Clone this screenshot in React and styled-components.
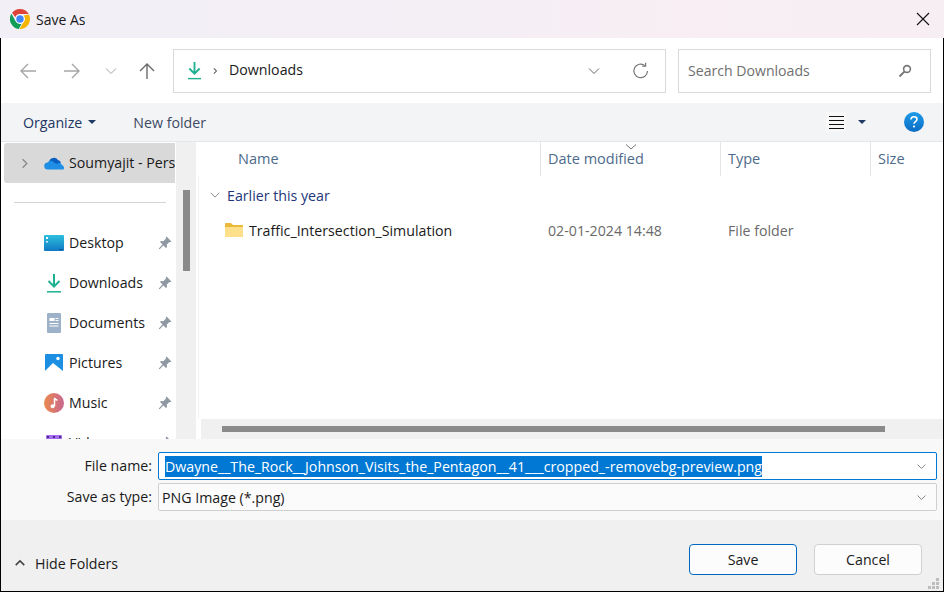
import React from "react";
import styled, { createGlobalStyle } from "styled-components";

const Global = createGlobalStyle`
  html, body { margin: 0; padding: 0; background: #fff; }
  * { box-sizing: border-box; }
  #root { width: 944px; height: 592px; }
`;

const Dialog = styled.div`
  width: 944px; height: 592px; display: flex; flex-direction: column; overflow: hidden;
  font-family: "Open Sans", "Noto Sans", sans-serif; font-size: 14.2px; color: #1a1a1a;
  border-bottom: 1px solid #000; background: #fff;
`;
const TitleBar = styled.div`
  height: 38px; flex: none; display: flex; align-items: center; padding: 0 14px 0 10px; gap: 6px;
  background: linear-gradient(90deg, #f2eff6 0%, #f4eff5 50%, #f8eef3 72%, #f7eef4 100%);
`;
const TitleText = styled.span` font-size: 14px; flex: 1; `;
const Body = styled.div`
  flex: 1; min-height: 0; display: flex; flex-direction: column;
  border-left: 1px solid #000; border-right: 1px solid #000;
`;
const NavRow = styled.div`
  height: 65px; flex: none; display: flex; align-items: center; padding: 0 12px 0 19px; background: #fff;
`;
const NavButton = styled.div`
  width: ${p => p.$w}px; flex: none; display: flex; align-items: center; justify-content: flex-start;
`;
const AddressBox = styled.div`
  width: 493px; height: 44px; flex: none; display: flex; align-items: center; margin-right: 12px;
  border: 1px solid #d9d9d9; padding: 0 15px 0 13px;
`;
const Crumb = styled.span` flex: 1; margin-left: 10px; padding-bottom: 2px; `;
const CrumbSep = styled.span` display: flex; margin-left: 9px; `;
const CrumbDrop = styled.span` display: flex; margin-right: 2px; `;
const RefreshSlot = styled.span` display: flex; margin-left: 29px; `;
const SearchBox = styled.div`
  width: 253px; height: 44px; flex: none; display: flex; align-items: center; justify-content: space-between;
  border: 1px solid #d9d9d9; padding: 0 18px 0 9px; color: #6f6f6f; font-size: 14.1px;
`;
const Toolbar = styled.div`
  height: 39px; flex: none; display: flex; align-items: center; padding: 0 19px 0 22px; background: #f3f4f6;
  border-bottom: 1px solid #e6e6e6; color: #1f3864;
`;
const ToolLabel = styled.span` display: flex; align-items: center; gap: 6px; color: ${p => p.$c || "#22365f"}; margin-right: ${p => p.$mr || 0}px; `;
const ToolSpacer = styled.div` flex: 1; `;
const ViewButton = styled.span` display: flex; width: 20px; height: 20px; align-items: center; justify-content: center; background: #f8f8f8; margin-right: 12px; `;
const Caret = styled.span`
  width: 0; height: 0; border-left: 4px solid transparent; border-right: 4px solid transparent;
  border-top: 4px solid #1f3864; display: inline-block;
`;
const HelpGap = styled.span` width: 38px; `;
const Main = styled.div` flex: 1; min-height: 0; display: flex; `;
const Sidebar = styled.div` width: 175px; flex: none; padding: 1px 0 0 3px; overflow: hidden; `;
const SelectedRow = styled.div`
  height: 40px; display: flex; align-items: center; background: #d9d9d9; border-radius: 3px 0 0 3px;
  padding-left: 14px; white-space: nowrap; overflow: hidden; margin-right: 1px;
`;
const RowArrow = styled.span` display: flex; flex: none; margin-right: 13px; `;
const RowCloud = styled.span` display: flex; flex: none; margin-right: 5px; `;
const RowLabel = styled.span` padding-bottom: 2px; `;
const Divider = styled.div` height: 1px; background: #d4d4d4; margin: 19px 10px 20px 10px; `;
const NavItem = styled.div` height: 40px; display: flex; align-items: center; padding-left: 37px; `;
const NavIcon = styled.span` width: 25px; display: flex; justify-content: center; flex: none; margin-right: 3px; `;
const NavText = styled.span` flex: 1; white-space: nowrap; padding-bottom: 2px; `;
const PinSlot = styled.span` display: flex; flex: none; margin-right: 4px; `;
const SideTrack = styled.div` width: 20px; flex: none; background: #f0f0f0; padding: 48px 6px 0 7px; `;
const SideThumb = styled.div` height: 81px; background: #8a8a8a; `;
const ListPane = styled.div` flex: 1; min-width: 0; display: flex; flex-direction: column; `;
const ListHeader = styled.div` height: 34px; flex: none; display: grid; grid-template-columns: 345px 180px 150px 1fr; color: #4e6a8a; font-size: 14.5px; `;
const HeadCell = styled.div`
  position: relative; display: flex; align-items: center; padding: 0 0 2px ${p => p.$pl || 7}px;
  border-right: ${p => p.$noline ? "none" : "1px solid #e5e5e5"};
`;
const SortMark = styled.span` position: absolute; left: 84px; top: 2px; display: flex; `;
const ListBody = styled.div` flex: 1; min-height: 0; margin-left: 2px; border-left: 1px solid #f2f2f2; display: flex; flex-direction: column; `;
const GroupRow = styled.div` height: 39px; display: flex; align-items: center; padding: 0 0 1px 10px; gap: 6px; color: #22367a; flex: none; `;
const FileRow = styled.div` height: 30px; display: grid; grid-template-columns: 342px 180px 150px; align-items: center; flex: none; `;
const FileName = styled.div` display: flex; align-items: center; gap: 6px; padding-left: 26px; `;
const FileMeta = styled.div` color: #6a6a6a; padding-left: 7px; `;
const HTrack = styled.div` height: 20px; flex: none; background: #f0f0f0; margin-left: 5px; padding: 7px 58px 7px 21px; `;
const HThumb = styled.div` height: 6px; background: #8a8a8a; `;
const FormArea = styled.div`
  height: 81px; flex: none; background: #f8f8f8; padding: 13px 6px 0 0; display: grid;
  grid-template-columns: 151px 1fr; column-gap: 6px; row-gap: 3px; grid-auto-rows: 28px; align-items: center;
`;
const FieldLabel = styled.label` text-align: right; white-space: nowrap; padding-bottom: 2px; `;
const Field = styled.div`
  height: 28px; display: flex; align-items: center; justify-content: space-between; background: ${p => p.$focus ? "#fff" : "#fbfbfb"};
  border: 1px solid ${p => p.$focus ? "#0078d4" : "#cfcfcf"}; border-radius: 2px;
  padding: 0 9px 0 ${p => p.$focus ? 6 : 3}px; white-space: nowrap;
`;
const Selected = styled.span` background: #0078d4; color: #fff; line-height: 21px; `;
const Footer = styled.div`
  height: 71px; flex: none; background: #f0f0f0; display: flex; align-items: flex-start; position: relative;
  padding: 24px 21px 0 13px;
`;
const HideFolders = styled.div` display: flex; align-items: center; gap: 9px; flex: 1; margin-top: 7px; height: 24px; `;
const Btn = styled.button`
  width: 108px; height: 31px; font: inherit; color: #1a1a1a; background: #fcfcfc; padding: 0; border-radius: 4px;
  border: 1px solid ${p => p.$primary ? "#0067c0" : "#d0d0d0"}; margin-left: ${p => p.$ml || 0}px;
`;
const Grip = styled.svg` position: absolute; right: 3px; bottom: 1px; `;

const Chevron = ({ size = 14, color = "#777", up, right, w = 1 }) => (
  <svg width={size} height={size} viewBox="0 0 14 14" fill="none" stroke={color} strokeWidth={w}>
    <path d={up ? "M2 9.5 7 4.5 12 9.5" : right ? "M5 2.5 9.5 7 5 11.5" : "M2 4.5 7 9.5 12 4.5"} />
  </svg>
);
const Arrow = ({ color, dir }) => {
  const d = { left: "M16 9H1M8 2 1 9l7 7", right: "M0 9h15M8 2l7 7-7 7", up: "M9 17V2M2 9l7-7 7 7" }[dir];
  return <svg width="18" height="18" viewBox="0 0 18 18" fill="none" stroke={color} strokeWidth="1.4"><path d={d} /></svg>;
};
const DownloadIcon = ({ s = 16 }) => (
  <svg width={s} height={s * 1.25} viewBox="0 0 16 20" fill="none" stroke="#1fb192" strokeWidth="2">
    <path d="M8 1v12M2.5 8 8 13.5 13.5 8" /><path d="M1 18.8h14" strokeWidth="1.5" />
  </svg>
);
const Pin = () => (
  <svg width="14" height="14" viewBox="0 0 14 14">
    <path fill="#8f98a3" d="M8.6.6 13.4 5.4 12.4 6.3 11.4 6 8.8 8.6 9 11 8 12 5.4 9.4 1.6 13.2.8 12.4 4.6 8.6 2 6l1-1 2.4.2L8 2.6 7.7 1.6Z" />
  </svg>
);
const ChromeLogo = () => (
  <svg width="20" height="20" viewBox="2 2 44 44">
    <path fill="#db4437" d="M24 2a22 22 0 0 1 19.05 11H24a11 11 0 0 0-10.2 6.9L6.5 10.3A22 22 0 0 1 24 2Z" />
    <path fill="#0f9d58" d="M5 12.5 14.5 29A11 11 0 0 0 27.6 34.4L21.2 45.8A22 22 0 0 1 5 12.5Z" />
    <path fill="#f4b400" d="M43.6 14A22 22 0 0 1 23 46L32.6 29.5A11 11 0 0 0 32 16.5Z" />
    <circle cx="24" cy="24" r="10.5" fill="#fff" />
    <circle cx="24" cy="24" r="8.2" fill="#4285f4" />
  </svg>
);
const CloudIcon = () => (
  <svg width="20" height="14" viewBox="0 0 20 14">
    <path fill="#0a5fc0" d="M5 6a5 5 0 0 1 9-2 4 4 0 0 1 3 3l-9 3-4-3Z" />
    <path fill="#1f8fe5" d="M4 13.5a3.5 3.5 0 0 1-.5-7A4 4 0 0 1 10 6.5l3 1.5a3 3 0 0 1 5 1 3 3 0 0 1 1.5 4.5Z" />
  </svg>
);
const DesktopIcon = () => (
  <svg width="20" height="16" viewBox="0 0 20 16">
    <defs><linearGradient id="dk" x1="0" y1="0" x2="0" y2="1"><stop offset="0" stopColor="#2cc0dd" /><stop offset="1" stopColor="#1178c4" /></linearGradient></defs>
    <rect width="20" height="16" rx="1" fill="url(#dk)" />
    <rect x="2" y="2" width="2" height="2" fill="#fff" /><rect x="2" y="6" width="2" height="1.5" fill="#d5f2fa" />
    <rect x="15" y="14" width="4" height="1" fill="#0a5a9c" />
  </svg>
);
const DocIcon = () => (
  <svg width="14" height="20" viewBox="0 0 14 20">
    <rect width="14" height="20" rx="1" fill="#9db2c9" />
    <g fill="#fff"><rect x="2.5" y="5" width="5" height="3" /><rect x="8.5" y="5" width="3" height="1" /><rect x="8.5" y="7" width="3" height="1" /><rect x="2.5" y="10" width="9" height="1" /><rect x="2.5" y="12.5" width="9" height="1" /></g>
  </svg>
);
const PicturesIcon = () => (
  <svg width="18" height="18" viewBox="0 0 18 18">
    <rect width="18" height="18" rx="1" fill="#1c8fe3" />
    <path fill="#fff" d="M0 17 8 9l10 8v1H0Z" /><circle cx="13" cy="4.5" r="1.7" fill="#fff" />
  </svg>
);
const MusicIcon = () => (
  <svg width="20" height="20" viewBox="0 0 20 20">
    <defs><linearGradient id="mu" x1="0" y1="0" x2="1" y2="0"><stop offset="0" stopColor="#ea8a4e" /><stop offset="1" stopColor="#c9668f" /></linearGradient></defs>
    <circle cx="10" cy="10" r="10" fill="url(#mu)" />
    <path fill="none" stroke="#fff" strokeWidth="1.5" d="M10.5 13V5c.3 1.6 1.6 2 3 2.3" /><circle cx="8.6" cy="13.2" r="2" fill="#fff" />
  </svg>
);
const VideoIcon = () => (
  <svg width="16" height="16" viewBox="0 0 16 16">
    <rect width="16" height="16" rx="1" fill="#a56cf0" />
    <g fill="#4a2a90"><rect x="1" y="1" width="2" height="2" /><rect x="7" y="1" width="2" height="2" /><rect x="13" y="1" width="2" height="2" /></g>
  </svg>
);
const FolderIcon = () => (
  <svg width="18" height="14" viewBox="0 0 18 14">
    <path fill="#eab93a" d="M0 1a1 1 0 0 1 1-1h5l2 2h9a1 1 0 0 1 1 1v10a1 1 0 0 1-1 1H1a1 1 0 0 1-1-1Z" />
    <path fill="#ffe08a" d="M0 4h18v9a1 1 0 0 1-1 1H1a1 1 0 0 1-1-1Z" />
  </svg>
);
const Help = () => (
  <svg width="20" height="20" viewBox="0 0 20 20">
    <defs><linearGradient id="hp" x1="0" y1="0" x2="0" y2="1"><stop offset="0" stopColor="#1e9be8" /><stop offset="1" stopColor="#0b6cc4" /></linearGradient></defs>
    <circle cx="10" cy="10" r="10" fill="url(#hp)" />
    <path fill="none" stroke="#fff" strokeWidth="1.6" d="M7 7.5C7 5.5 8.5 4.8 10 4.8s3 .9 3 2.5c0 2.2-3 2.3-3 4.5" /><circle cx="10" cy="14.5" r="1.1" fill="#fff" />
  </svg>
);

const pinned = [
  ["Desktop", <DesktopIcon />], ["Downloads", <DownloadIcon s={16} />], ["Documents", <DocIcon />],
  ["Pictures", <PicturesIcon />], ["Music", <MusicIcon />], ["Videos", <VideoIcon />],
];

export default function App() {
  return (
    <Dialog>
      <Global />
      <TitleBar>
        <ChromeLogo />
        <TitleText>Save As</TitleText>
        <svg width="14" height="14" viewBox="0 0 14 14" stroke="#111" strokeWidth="1.1"><path d="M1 1l12 12M13 1 1 13" /></svg>
      </TitleBar>
      <Body>
        <NavRow>
          <NavButton $w={44}><Arrow dir="left" color="#a6a6a6" /></NavButton>
          <NavButton $w={40}><Arrow dir="right" color="#a6a6a6" /></NavButton>
          <NavButton $w={34}><Chevron color="#a6a6a6" /></NavButton>
          <NavButton $w={35}><Arrow dir="up" color="#6b6b6b" /></NavButton>
          <AddressBox>
            <DownloadIcon s={15} />
            <CrumbSep><Chevron size={8} right color="#555" w={1.8} /></CrumbSep>
            <Crumb>Downloads</Crumb>
            <CrumbDrop><Chevron color="#666" /></CrumbDrop>
            <RefreshSlot>
              <svg width="18" height="18" viewBox="0 0 18 18" fill="none" stroke="#777" strokeWidth="1.2">
                <path d="M15.5 9A6.8 6.8 0 1 1 13 3.6" /><path d="M13.6 .8v3.4h-3.4" />
              </svg>
            </RefreshSlot>
          </AddressBox>
          <SearchBox>
            Search Downloads
            <svg width="14" height="14" viewBox="0 0 14 14" fill="none" stroke="#777"><circle cx="9" cy="5" r="3.4" strokeWidth="1.6" /><path d="M6.4 7.6 1.5 12.5" strokeWidth="2" /></svg>
          </SearchBox>
        </NavRow>
        <Toolbar>
          <ToolLabel $mr={37}>Organize <Caret /></ToolLabel>
          <ToolLabel $c="#3d4a63">New folder</ToolLabel>
          <ToolSpacer />
          <ViewButton>
            <svg width="15" height="14" viewBox="0 0 15 14" stroke="#111"><path d="M0 1.5h15M0 5.5h15M0 9.5h15M0 13.5h15" /></svg>
          </ViewButton>
          <Caret />
          <HelpGap />
          <Help />
        </Toolbar>
        <Main>
          <Sidebar>
            <SelectedRow>
              <RowArrow><Chevron size={13} right color="#888" w={1.4} /></RowArrow>
              <RowCloud><CloudIcon /></RowCloud>
              <RowLabel>Soumyajit - Personal</RowLabel>
            </SelectedRow>
            <Divider />
            {pinned.map(([label, icon]) => (
              <NavItem key={label}>
                <NavIcon>{icon}</NavIcon>
                <NavText>{label}</NavText>
                <PinSlot><Pin /></PinSlot>
              </NavItem>
            ))}
          </Sidebar>
          <SideTrack><SideThumb /></SideTrack>
          <ListPane>
            <ListHeader>
              <HeadCell $pl={42}>Name</HeadCell>
              <HeadCell>
                <SortMark><svg width="12" height="6" viewBox="0 0 12 6" fill="none" stroke="#777"><path d="M1 .5 6 5 11 .5" /></svg></SortMark>
                Date modified
              </HeadCell>
              <HeadCell>Type</HeadCell>
              <HeadCell $noline>Size</HeadCell>
            </ListHeader>
            <ListBody>
              <GroupRow><Chevron size={12} color="#777" />Earlier this year</GroupRow>
              <FileRow>
                <FileName><FolderIcon />Traffic_Intersection_Simulation</FileName>
                <FileMeta>02-01-2024 14:48</FileMeta>
                <FileMeta>File folder</FileMeta>
              </FileRow>
            </ListBody>
            <HTrack><HThumb /></HTrack>
          </ListPane>
        </Main>
        <FormArea>
          <FieldLabel>File name:</FieldLabel>
          <Field $focus>
            <Selected>Dwayne__The_Rock__Johnson_Visits_the_Pentagon__41___cropped_-removebg-preview.png</Selected>
            <Chevron size={11} color="#666" />
          </Field>
          <FieldLabel>Save as type:</FieldLabel>
          <Field>
            PNG Image (*.png)
            <Chevron size={11} color="#666" />
          </Field>
        </FormArea>
        <Footer>
          <HideFolders>
            <Chevron size={12} up color="#444" w={1.8} />
            Hide Folders
          </HideFolders>
          <Btn $primary>Save</Btn>
          <Btn $ml={17}>Cancel</Btn>
          <Grip width="12" height="12" viewBox="0 0 12 12" fill="#bdbdbd">
            <rect x="8" y="0" width="3" height="3" /><rect x="4" y="4" width="3" height="3" /><rect x="8" y="4" width="3" height="3" />
            <rect x="0" y="8" width="3" height="3" /><rect x="4" y="8" width="3" height="3" /><rect x="8" y="8" width="3" height="3" />
          </Grip>
        </Footer>
      </Body>
    </Dialog>
  );
}
